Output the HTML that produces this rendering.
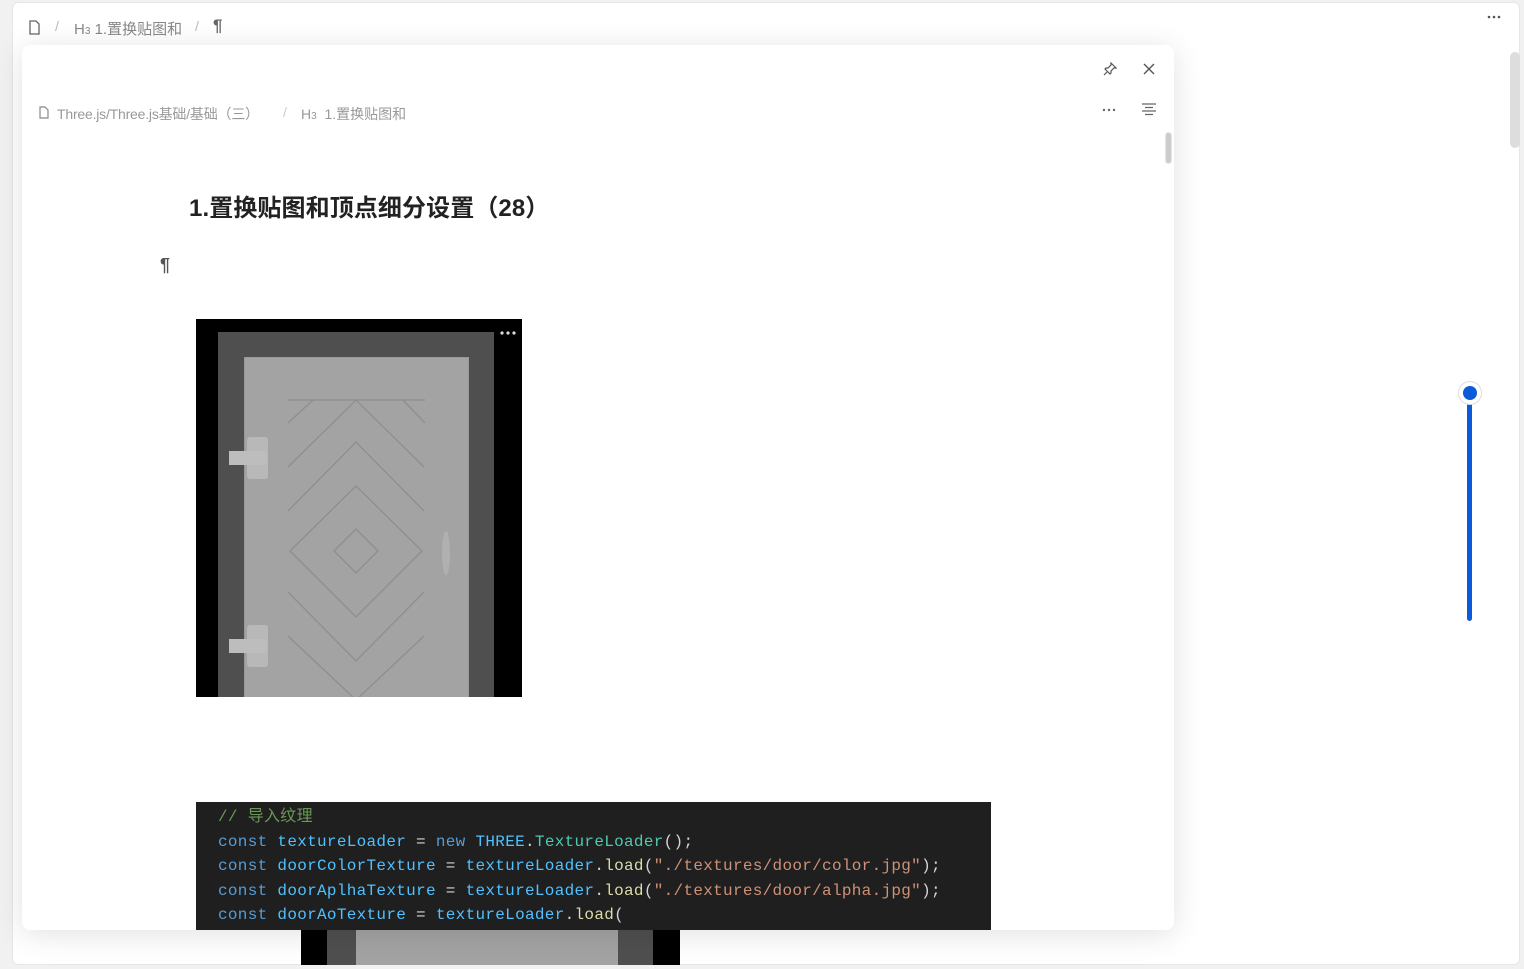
<!DOCTYPE html>
<html><head><meta charset="utf-8"><style>
*{margin:0;padding:0;box-sizing:border-box}
body{width:1524px;height:969px;background:#f1f1f1;position:relative;overflow:hidden;font-family:"Liberation Sans","Noto Sans CJK SC",sans-serif}
.main{position:absolute;left:12px;top:2px;width:1508px;height:963px;background:#fff;border-radius:6px;border:1px solid #e6e6e6}
.abs{position:absolute}
.crumb{color:#888;font-size:14px}
.pop{position:absolute;left:22px;top:45px;width:1152px;height:885px;background:#fff;border-radius:8px;box-shadow:0 4px 30px rgba(0,0,0,.12);overflow:hidden}
.code{position:absolute;left:174px;top:757px;width:795px;height:140px;background:#1f1f1f;font-family:"Liberation Mono","Noto Sans CJK SC",monospace;font-size:16px;line-height:24.5px;padding:3px 0 0 22px;color:#d4d4d4;white-space:pre;letter-spacing:0.3px}
.k{color:#569cd6}.v{color:#4fc1ff}.c{color:#6a9955}.t{color:#4ec9b0}.f{color:#dcdcaa}.s{color:#ce9178}
</style></head><body>
<div class="main"></div>
<svg class="abs" style="left:28px;top:20px" width="13" height="15" viewBox="0 0 13 15"><path d="M2 1h6l3 3v10H2z" fill="none" stroke="#666" stroke-width="1.3"/></svg>
<div class="abs crumb" style="left:55px;top:18px;color:#bbb">/</div>
<div class="abs crumb" style="left:74px;top:18px;font-size:15px">H<span style="font-size:10px">3</span> 1.置换贴图和</div>
<div class="abs crumb" style="left:195px;top:18px;color:#bbb">/</div>
<div class="abs" style="left:213px;top:16px;font-size:17px;font-weight:bold;color:#666">¶</div>
<svg class="abs" style="left:1487px;top:15px" width="16" height="4"><circle cx="2" cy="2" r="1.3" fill="#555"/><circle cx="7" cy="2" r="1.3" fill="#555"/><circle cx="12" cy="2" r="1.3" fill="#555"/></svg>
<div class="abs" style="left:1510px;top:52px;width:10px;height:96px;background:#ddd;border-radius:5px"></div>

<div class="abs" style="left:1467px;top:395px;width:5px;height:226px;background:#0a5ad9;border-radius:3px"></div>
<div class="abs" style="left:1458px;top:381px;width:24px;height:24px;border-radius:50%;background:#fff;border:1px solid #ddd"></div>
<div class="abs" style="left:1463px;top:386px;width:14px;height:14px;border-radius:50%;background:#0a5ad9"></div>

<div class="abs" style="left:301px;top:920px;width:379px;height:45px;background:#000">
<div class="abs" style="left:26px;top:0;width:326px;height:45px;background:#4f4f4f"></div>
<div class="abs" style="left:55px;top:0;width:262px;height:45px;background:#a3a3a3"></div>
</div>

<div class="pop">
<svg class="abs" style="left:1081px;top:17px" width="14" height="14" viewBox="0 0 14 14"><path d="M8 1l5 5-2 0-3 3 0 2-1 1-5-5 1-1 2 0 3-3zM4 10l-3 3" fill="none" stroke="#555" stroke-width="1.2"/></svg>
<svg class="abs" style="left:1121px;top:18px" width="12" height="12" viewBox="0 0 12 12"><path d="M1 1l10 10M11 1L1 11" stroke="#555" stroke-width="1.4"/></svg>
<svg class="abs" style="left:1080px;top:63px" width="15" height="4"><circle cx="2" cy="2" r="1.2" fill="#666"/><circle cx="7" cy="2" r="1.2" fill="#666"/><circle cx="12" cy="2" r="1.2" fill="#666"/></svg>
<svg class="abs" style="left:1120px;top:58px" width="14" height="13" viewBox="0 0 14 13"><path d="M0 1h14M3 4.5h8M0 8h14M3 11.5h8" stroke="#666" stroke-width="1.3"/></svg>
<div class="abs" style="left:1143px;top:87px;width:7px;height:32px;background:#ccc;border-radius:4px;border:1px solid #e5e5e5"></div>

<svg class="abs" style="left:17px;top:61px" width="10" height="13" viewBox="0 0 10 13"><path d="M1 1h5l3 3v8H1z" fill="none" stroke="#888" stroke-width="1.2"/></svg>
<div class="abs crumb" style="left:35px;top:59px;font-size:14px;color:#999;letter-spacing:-0.2px">Three.js/Three.js基础/基础（三）</div>
<div class="abs crumb" style="left:261px;top:59px;color:#ccc">/</div>
<div class="abs crumb" style="left:279px;top:59px;font-size:14px;color:#999">H<span style="font-size:10px">3</span>&nbsp; 1.置换贴图和</div>

<div class="abs" style="left:167px;top:143px;font-size:24px;font-weight:bold;color:#222;letter-spacing:0.1px">1.置换贴图和顶点细分设置（28）</div>
<div class="abs" style="left:138px;top:210px;font-size:18px;font-weight:bold;color:#555">¶</div>

<div class="abs" style="left:174px;top:274px;width:326px;height:378px;background:#000;overflow:hidden">
 <div class="abs" style="left:22px;top:13px;width:276px;height:370px;background:#4f4f4f"></div>
 <div class="abs" style="left:48px;top:38px;width:225px;height:350px;background:#a3a3a3;border:1px solid #999"></div>
 <svg class="abs" style="left:0;top:0" width="326" height="378">
  <g fill="none" stroke="#8e8e8e" stroke-width="1.3">
   <path d="M92 81h137"/>
   <path d="M117 81l-25 23M207 81l22 23"/>
   <path d="M92 148l68-67 68 67"/>
   <path d="M92 192l68-69 68 69"/>
   <path d="M160 167l66 65-66 66-66-66z"/>
   <path d="M160 210l22 22-22 22-22-22z"/>
   <path d="M92 273l68 69 68-69"/>
   <path d="M92 317l68 64 68-64"/>
  </g>
  <rect x="51" y="118" width="21" height="42" rx="3" fill="#b8b8b8"/>
  <rect x="33" y="132" width="38" height="14" fill="#bdbdbd"/>
  <rect x="51" y="306" width="21" height="42" rx="3" fill="#b8b8b8"/>
  <rect x="33" y="320" width="38" height="14" fill="#bdbdbd"/>
  <ellipse cx="250" cy="234" rx="4" ry="22" fill="#b0b0b0"/>
  <circle cx="306" cy="14" r="1.6" fill="#ddd"/><circle cx="312" cy="14" r="1.6" fill="#ddd"/><circle cx="318" cy="14" r="1.6" fill="#ddd"/>
 </svg>
</div>

<div class="code"><span class="c">// 导入纹理</span>
<span class="k">const</span> <span class="v">textureLoader</span> = <span class="k">new</span> <span class="v">THREE</span>.<span class="t">TextureLoader</span>();
<span class="k">const</span> <span class="v">doorColorTexture</span> = <span class="v">textureLoader</span>.<span class="f">load</span>(<span class="s">"./textures/door/color.jpg"</span>);
<span class="k">const</span> <span class="v">doorAplhaTexture</span> = <span class="v">textureLoader</span>.<span class="f">load</span>(<span class="s">"./textures/door/alpha.jpg"</span>);
<span class="k">const</span> <span class="v">doorAoTexture</span> = <span class="v">textureLoader</span>.<span class="f">load</span>(</div>
</div>
</body></html>
